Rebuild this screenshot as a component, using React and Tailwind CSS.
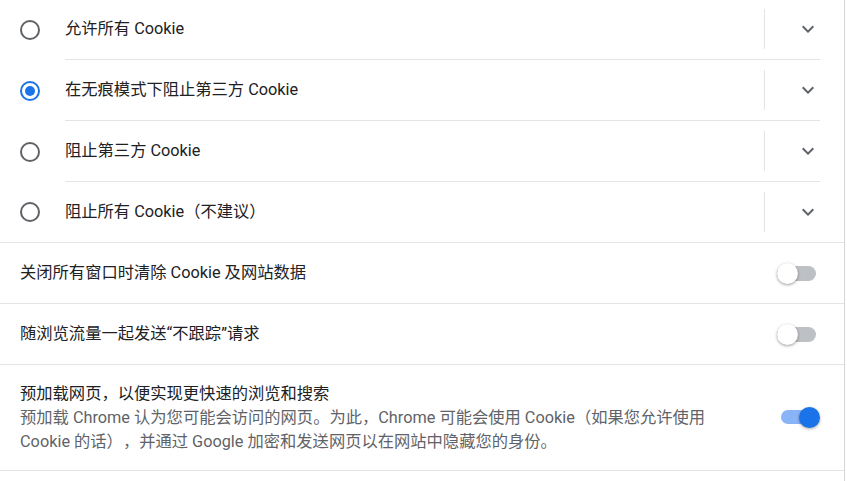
import React from "react";

const font = { fontFamily: 'Roboto, "Noto Sans CJK SC", sans-serif' };

function Chevron() {
  return (
    <svg width="24" height="24" viewBox="0 0 24 24" className="shrink-0">
      <path d="M7.41 8.59L12 13.17l4.59-4.58L18 10l-6 6-6-6 1.41-1.41z" fill="#5f6368" />
    </svg>
  );
}

function Radio({ checked }) {
  if (checked) {
    return (
      <div className="w-[20px] h-[20px] rounded-full border-[2px] border-[#1a73e8] flex items-center justify-center shrink-0">
        <div className="w-[10px] h-[10px] rounded-full bg-[#1a73e8]" />
      </div>
    );
  }
  return <div className="w-[20px] h-[20px] rounded-full border-[2px] border-[#5f6368] shrink-0" />;
}

function RadioRow({ label, checked, last }) {
  return (
    <div className={"flex items-stretch h-[61px] " + (last ? "border-b border-[#e4e4e4]" : "")}>
      <div className="w-[65px] pl-[20px] flex items-center shrink-0">
        <Radio checked={checked} />
      </div>
      <div
        className={
          "flex-1 mr-[24px] flex items-center " + (last ? "" : "border-b border-[#e4e4e4]")
        }
      >
        <span className="text-[16.3px] text-[#202124] leading-[24px] whitespace-nowrap">{label}</span>
        <div className="ml-auto w-px h-[40px] bg-[#e4e4e4]" />
        <div className="ml-[31px] flex items-center">
          <Chevron />
        </div>
      </div>
    </div>
  );
}

function Toggle({ on }) {
  if (on) {
    return (
      <div className="relative w-[43px] h-[21px] shrink-0">
        <div className="absolute left-[4px] top-[3px] w-[36px] h-[14px] rounded-full bg-[#8ab4f8]" />
        <div className="absolute left-[22px] top-0 w-[21px] h-[21px] rounded-full bg-[#1a73e8] shadow-[0_1px_3px_rgba(0,0,0,0.35)]" />
      </div>
    );
  }
  return (
    <div className="relative w-[43px] h-[21px] shrink-0">
      <div className="absolute left-0 top-[3px] w-[39px] h-[15px] rounded-full bg-[#bdc1c6]" />
      <div className="absolute left-0 top-0 w-[21px] h-[21px] rounded-full bg-white shadow-[0_1px_3px_rgba(0,0,0,0.4)]" />
    </div>
  );
}

function ToggleRow({ label, on }) {
  return (
    <div className="flex items-center h-[61px] pl-[20px] pr-[24px] border-b border-[#e4e4e4]">
      <span className="text-[16.3px] text-[#202124] leading-[24px] whitespace-nowrap">{label}</span>
      <div className="ml-auto">
        <Toggle on={on} />
      </div>
    </div>
  );
}

export default function App() {
  return (
    <div className="w-[847px] h-[481px] bg-white overflow-hidden flex [text-spacing-trim:space-all]" style={font}>
      <div className="w-[845px] h-full border-r border-[#d6d6d6] flex flex-col">
        <div className="-mt-[1px] flex flex-col">
          <RadioRow label="允许所有 Cookie" />
          <RadioRow label="在无痕模式下阻止第三方 Cookie" checked />
          <RadioRow label="阻止第三方 Cookie" />
          <RadioRow label="阻止所有 Cookie（不建议）" last />
          <ToggleRow label="关闭所有窗口时清除 Cookie 及网站数据" />
          <ToggleRow label="随浏览流量一起发送“不跟踪”请求" />
          <div className="flex items-center h-[106px] pl-[20px] pr-[24px] border-b border-[#e4e4e4]">
            <div className="flex-1 flex flex-col leading-[24px] text-[16.3px]">
              <span className="text-[#202124] whitespace-nowrap">预加载网页，以便实现更快速的浏览和搜索</span>
              <span className="text-[#5f6368] whitespace-nowrap">
                预加载 Chrome 认为您可能会访问的网页。为此，Chrome 可能会使用 Cookie（如果您允许使用
              </span>
              <span className="text-[#5f6368] whitespace-nowrap">
                Cookie 的话），并通过 Google 加密和发送网页以在网站中隐藏您的身份。
              </span>
            </div>
            <Toggle on />
          </div>
        </div>
      </div>
    </div>
  );
}
